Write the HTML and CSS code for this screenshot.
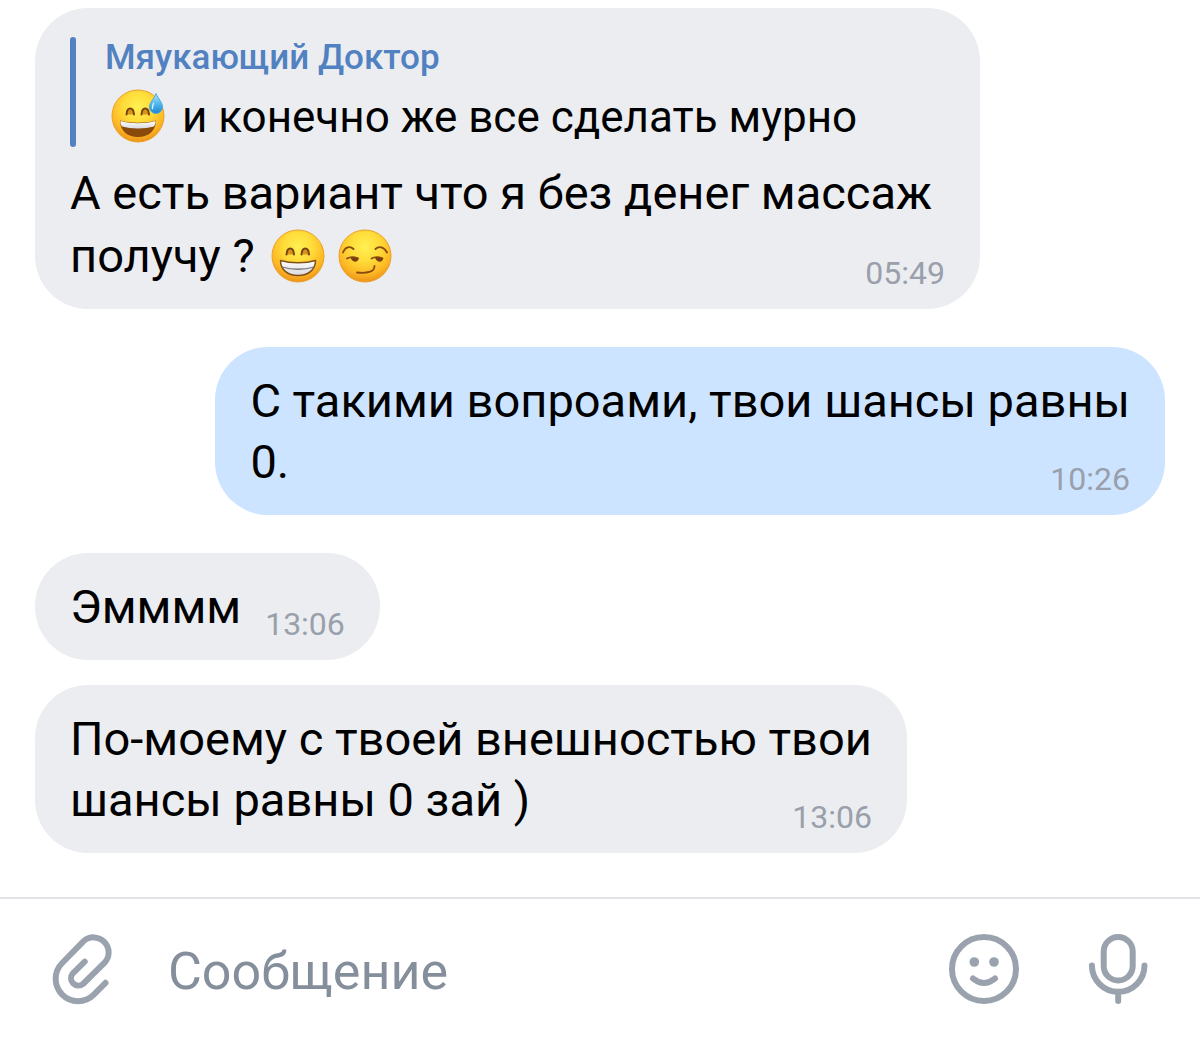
FILE: index.html
```html
<!DOCTYPE html>
<html lang="ru">
<head>
<meta charset="utf-8">
<meta name="viewport" content="width=device-width, initial-scale=1">
<title>Сообщения</title>
<link rel="stylesheet" href="styles.css">
</head>
<body>
<svg class="defs" aria-hidden="true">
  <defs>
    <radialGradient id="face" cx="50%" cy="32%" r="70%">
      <stop offset="0" stop-color="#fff052"/>
      <stop offset="0.4" stop-color="#ffdc3a"/>
      <stop offset="0.75" stop-color="#fdb824"/>
      <stop offset="1" stop-color="#ea8f18"/>
    </radialGradient>
    <linearGradient id="drop" x1="0" y1="0" x2="0" y2="1">
      <stop offset="0" stop-color="#b9e6fb"/>
      <stop offset="0.5" stop-color="#55b9ee"/>
      <stop offset="1" stop-color="#1b87d2"/>
    </linearGradient>
    <linearGradient id="teeth" x1="0" y1="0" x2="0" y2="1">
      <stop offset="0" stop-color="#ffffff"/>
      <stop offset="1" stop-color="#d9d9df"/>
    </linearGradient>
  </defs>
</svg>

<main class="chat">
  <section class="messages" aria-label="Переписка">
    <article class="bubble bubble--reply">
      <blockquote class="quote">
        <div class="quote__name">Мяукающий Доктор</div>
        <div class="quote__text"><svg class="emoji" viewBox="0 0 54 54" role="img" aria-label="😅">
          <circle cx="27" cy="27" r="26" fill="url(#face)" stroke="#eda02a"/>
          <path d="M15.500 25.500c.5-8 7-8 7.500 0M30.500 25.500c.5-8 7-8 7.500 0" fill="#d8951a" stroke="#774411" stroke-width="2" stroke-linecap="round"/>
          <path d="M9 31.500c10 3 26 3 36 0 0 10-7 16.500-18 16.500s-18-6.500-18-16.500z" fill="#8a4a0c"/>
          <path d="M9.500 32c10 3 25 3 35 0 .4 2-.6 4-1.500 5.500-9 2.500-23 2.500-32 0-1-1.500-1.900-3.500-1.500-5.500z" fill="url(#teeth)"/>
          <path d="M45 4.500c2 5 6.500 9 6.500 13.500a6.500 6.500 0 0 1-13 0C38.500 13.500 43.500 9.500 45 4.500z" fill="url(#drop)" stroke="#4aa9dd"/>
          <path d="M42.500 14.500c-1 2-1.500 3.500-1 5" fill="none" stroke="#d8f3ff" stroke-width="1.500" stroke-linecap="round"/>
        </svg> и конечно же все сделать мурно</div>
      </blockquote>
      <div class="line">А есть вариант что я без денег массаж</div>
      <div class="line line--last">
        <span>получу ? <svg class="emoji" viewBox="0 0 54 54" role="img" aria-label="😁">
          <circle cx="27" cy="27" r="26" fill="url(#face)" stroke="#eda02a"/>
          <path d="M15.500 25.500c.5-8 7-8 7.500 0M30.500 25.500c.5-8 7-8 7.500 0" fill="#d8951a" stroke="#774411" stroke-width="2" stroke-linecap="round"/>
          <path d="M9.500 31.500c10 3 25 3 35 0 0 9-7 15-17.500 15S9.500 40.500 9.500 31.500z" fill="url(#teeth)" stroke="#80501a" stroke-width="1.500" stroke-linejoin="round"/>
          <path d="M11 38c9.500 3 22.500 3 32 0" fill="none" stroke="#777477" stroke-width="1.300"/>
        </svg> <svg class="emoji" viewBox="0 0 54 54" role="img" aria-label="😏">
          <circle cx="27" cy="27" r="26" fill="url(#face)" stroke="#eda02a"/>
          <path d="M5 23.500c2-5.500 7-7 10.500-3.500M37.500 20c3.500-3.500 8.500-2 11.500 3.500M9 29.500c3.500-2 7-1.800 11 0M33.500 29.500c3.500-2 7-1.800 11 0" fill="none" stroke="#8a4b10" stroke-width="1.800" stroke-linecap="round"/>
          <path d="M12.500 28.700h8c.2 5.500-6 5.500-8 0zM37 28.700h8c.2 5.500-6 5.500-8 0z" fill="#7a3f0c"/>
          <path d="M19 43.500c10 1 17.500-.3 17.500-6.500" fill="none" stroke="#8a4b10" stroke-width="1.800" stroke-linecap="round"/>
        </svg></span>
        <time class="time" datetime="05:49">05:49</time>
      </div>
    </article>

    <article class="bubble bubble--out">
      <div class="line">С такими вопроами, твои шансы равны</div>
      <div class="line line--last"><span>0.</span><time class="time" datetime="10:26">10:26</time></div>
    </article>

    <article class="bubble">
      <div class="line line--last"><span>Эмммм</span><time class="time" datetime="13:06">13:06</time></div>
    </article>

    <article class="bubble bubble--next">
      <div class="line">По-моему с твоей внешностью твои</div>
      <div class="line line--last"><span>шансы равны 0 зай )</span><time class="time" datetime="13:06">13:06</time></div>
    </article>
  </section>

  <form class="composer">
    <button class="tool" type="button" aria-label="Прикрепить файл">
      <svg class="icon" viewBox="6 13 72 72"><path d="M65.500 62.800 53.800 74.600A22.300 22.300 0 0 1 22.200 43L43.400 21.400A15 15 0 0 1 64.600 42.600L43 64A7.400 7.400 0 0 1 32.600 53.600L44.700 41.700"/></svg>
    </button>
    <input class="composer__input" type="text" placeholder="Сообщение" aria-label="Сообщение">
    <div class="composer__tools">
      <button class="tool" type="button" aria-label="Смайлики">
        <svg class="icon" viewBox="0 0 72 72"><circle cx="36" cy="36" r="32"/><circle class="icon__dot" cx="26.300" cy="29" r="4.800"/><circle class="icon__dot" cx="46" cy="29" r="4.800"/><path d="M25 45.500Q36 54.500 47 45.500"/></svg>
      </button>
      <button class="tool" type="button" aria-label="Голосовое сообщение">
        <svg class="icon" viewBox="0 0 72 72"><rect x="21.700" y="4" width="29" height="43.500" rx="14.500"/><path d="M9.900 32.500a26.300 26.300 0 0 0 52.600 0M36.200 59V68"/></svg>
      </button>
    </div>
  </form>
</main>
</body>
</html>
```
FILE: styles.css
```css
* {
  box-sizing: border-box;
}

body {
  margin: 0;
  background: #fff;
  color: #000;
  font-family: Roboto, "Noto Sans", sans-serif;
  font-size: 47px;
  line-height: 61px;
}

.defs {
  position: absolute;
  width: 0;
  height: 0;
}

.chat {
  display: flex;
  flex-direction: column;
  min-height: 100vh;
}

.messages {
  flex: 1;
  display: flex;
  flex-direction: column;
  align-items: flex-start;
  gap: 38px;
  padding: 8px 35px 40px;
}

.bubble {
  max-width: 100%;
  padding: 23px 35px;
  border-radius: 53px;
  background: #ebedf0;
}

.bubble--reply {
  width: 945px;
  padding-top: 29px;
}

.bubble--out {
  align-self: flex-end;
  background: #cce4ff;
}

.bubble--next {
  margin-top: -13px;
}

.quote {
  position: relative;
  margin: 0 0 15px;
  padding-left: 35px;
}

.quote::before {
  content: "";
  position: absolute;
  inset: 0 auto 0 0;
  width: 6px;
  border-radius: 3px;
  background: #5181c1;
}

.quote__name {
  color: #5181c1;
  font-size: 35px;
  font-weight: 500;
  line-height: 41px;
}

.quote__text {
  padding-top: 5px;
  font-size: 44px;
  line-height: 59px;
}

.emoji {
  width: 54px;
  height: 54px;
  margin: 6px 0 0 5px;
  vertical-align: -11px;
}

.emoji + .emoji {
  margin-left: 1px;
}

.quote__text .emoji {
  margin: 6px 6px 0;
}

.line--last {
  display: flex;
  align-items: flex-end;
  justify-content: space-between;
  gap: 24px;
}

.time {
  color: #999fab;
  font-size: 32px;
  line-height: 26px;
}

.composer {
  display: flex;
  align-items: center;
  gap: 50px;
  padding: 34px 46px;
  border-top: 2px solid #e1e3e6;
}

.composer__input {
  flex: 1;
  min-width: 0;
  height: 72px;
  padding: 5px 0 0;
  border: 0;
  outline: 0;
  background: none;
  color: #000;
  font: inherit;
  font-size: 52px;
}

.composer__input::placeholder {
  color: #858f9c;
  opacity: 1;
}

.composer__tools {
  display: flex;
  gap: 62px;
}

.tool {
  flex: none;
  padding: 0;
  border: 0;
  background: none;
  cursor: pointer;
}

.icon {
  display: block;
  width: 72px;
  height: 72px;
  fill: none;
  stroke: #99a2ad;
  stroke-width: 6;
  stroke-linecap: round;
  stroke-linejoin: round;
}

.icon__dot {
  fill: #99a2ad;
  stroke: none;
}
```
